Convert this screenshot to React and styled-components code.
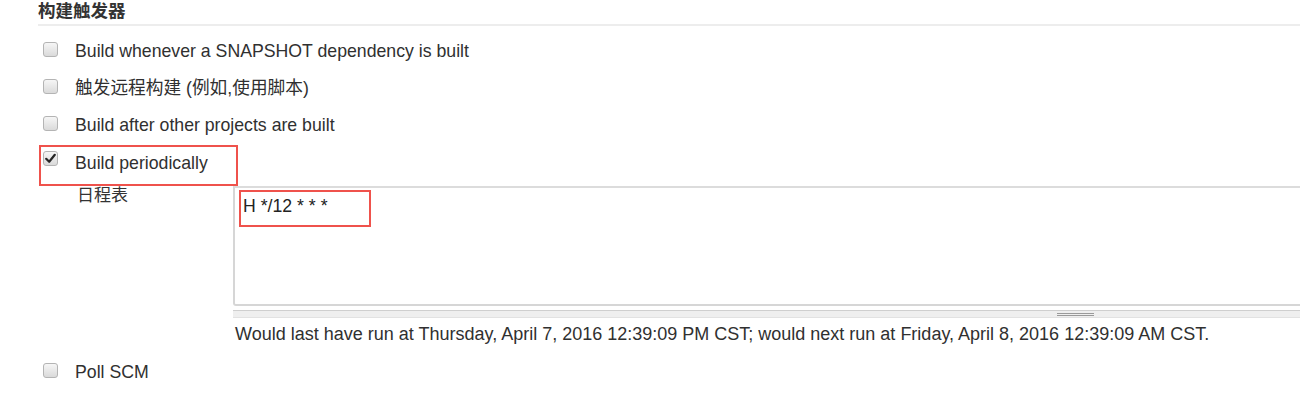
import React from "react";
import styled, { createGlobalStyle } from "styled-components";

const GlobalStyle = createGlobalStyle`
  html, body {
    margin: 0;
    padding: 0;
    background: #fff;
  }
  body {
    font-family: "Liberation Sans", Arial, "Noto Sans CJK SC", sans-serif;
    color: #333;
    overflow: hidden;
  }
`;

const Page = styled.div`
  width: 1300px;
  height: 400px;
  overflow: hidden;
  padding-left: 38px;
  box-sizing: border-box;
`;

const SectionTitle = styled.h3`
  margin: 0;
  height: 23px;
  padding-top: 1px;
  font-size: 17.5px;
  font-weight: bold;
  line-height: 20px;
  color: #333;
  border-bottom: 2px solid #ededed;
`;

const List = styled.ul`
  list-style: none;
  margin: 6px 0 0;
  padding: 0;
`;

const Row = styled.li`
  display: flex;
  align-items: center;
  height: 37px;
  margin-top: ${props => props.gap || 0}px;
`;

const FramedRow = styled.li`
  display: flex;
  align-items: flex-start;
  box-sizing: border-box;
  width: 199px;
  height: 41px;
  margin: 2px 0 0 1px;
  padding: 4px 0 0 2px;
  border: 2px solid #ef524c;
`;

const Box = styled.span`
  flex: none;
  display: flex;
  align-items: center;
  justify-content: center;
  box-sizing: border-box;
  width: 15px;
  height: 15px;
  margin-left: ${props => props.offset ?? 5}px;
  margin-bottom: ${props => props.lift ?? 0}px;
  border: 1px solid #b4b4b4;
  border-radius: 3px;
  background: linear-gradient(#f6f6f6, #dadada);
`;

const Label = styled.span`
  margin-left: 17px;
  margin-top: ${props => props.top ?? 0}px;
  font-size: 17.7px;
  line-height: 20px;
  white-space: nowrap;
  color: #303030;
`;

const Schedule = styled.div`
  display: flex;
`;

const FieldName = styled.div`
  flex: none;
  width: 195px;
  box-sizing: border-box;
  padding-left: 39px;
  font-size: 17px;
  line-height: 20px;
`;

const FieldBody = styled.div`
  flex: none;
  width: 1684px;
`;

const Editor = styled.div`
  box-sizing: border-box;
  height: 120px;
  padding: 2px 0 0 4px;
  border: 2px solid #d6d6d6;
  border-top-color: #dcdcdc;
  border-radius: 0 0 3px 3px;
`;

const Marked = styled.div`
  box-sizing: border-box;
  width: 132px;
  height: 37px;
  padding: 4px 0 0 2px;
  border: 2px solid #ef524c;
  font-size: 17.7px;
  line-height: 20px;
  color: #222;
`;

const Resizer = styled.div`
  display: flex;
  justify-content: center;
  align-items: center;
  box-sizing: border-box;
  height: 8px;
  margin-top: 4px;
  border-top: 1px solid #cfcfcf;
  border-bottom: 1px solid #e2e2e2;
  background: #efefef;
`;

const Grip = styled.span`
  width: 37px;
  height: 1px;
  border-top: 1px solid #9a9a9a;
  border-bottom: 1px solid #9a9a9a;
`;

const Hint = styled.div`
  margin: 6px 0 0 2px;
  font-size: 18px;
  line-height: 20px;
  white-space: nowrap;
  color: #303030;
`;

const Check = () => (
  <svg width="11" height="11" viewBox="0 0 11 11">
    <path d="M1.2 5.8 L4.2 8.8 L9.8 1.8" fill="none" stroke="#262626" strokeWidth="2.2" strokeLinecap="round" strokeLinejoin="round" />
  </svg>
);

const triggers = [
  "Build whenever a SNAPSHOT dependency is built",
  "触发远程构建 (例如,使用脚本)",
  "Build after other projects are built",
];

export default function App() {
  return (
    <Page>
      <GlobalStyle />
      <SectionTitle>构建触发器</SectionTitle>
      <List>
        {triggers.map(text => (
          <Row key={text}>
            <Box lift={3} />
            <Label>{text}</Label>
          </Row>
        ))}
        <FramedRow>
          <Box offset={0}>
            <Check />
          </Box>
          <Label top={2}>Build periodically</Label>
        </FramedRow>
      </List>
      <Schedule>
        <FieldName>日程表</FieldName>
        <FieldBody>
          <Editor>
            <Marked>H */12 * * *</Marked>
          </Editor>
          <Resizer>
            <Grip />
          </Resizer>
          <Hint>
            Would last have run at Thursday, April 7, 2016 12:39:09 PM CST; would next run at Friday, April 8, 2016 12:39:09 AM CST.
          </Hint>
        </FieldBody>
      </Schedule>
      <List>
        <Row gap={9}>
          <Box lift={3} />
          <Label>Poll SCM</Label>
        </Row>
      </List>
    </Page>
  );
}
